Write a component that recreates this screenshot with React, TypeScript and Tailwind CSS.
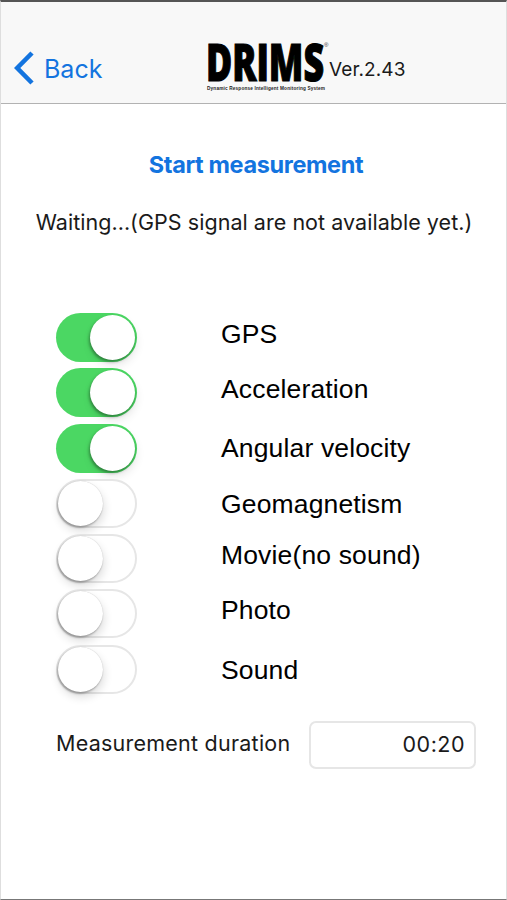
import React from "react";

type ToggleProps = {
    on: boolean;
};

type Sensor = {
    name: string;
    on: boolean;
    labelClass: string;
};

const sensors: Sensor[] = [
    { name: "GPS", on: true, labelClass: "pb-[8px]" },
    { name: "Acceleration", on: true, labelClass: "pb-[7px]" },
    { name: "Angular velocity", on: true, labelClass: "pb-0" },
    { name: "Geomagnetism", on: false, labelClass: "pt-[1px]" },
    { name: "Movie(no sound)", on: false, labelClass: "pb-[7px]" },
    { name: "Photo", on: false, labelClass: "pb-[7px]" },
    { name: "Sound", on: false, labelClass: "pt-[1px]" },
];

function Toggle({ on }: ToggleProps) {
    return (
        <button
            role="switch"
            aria-checked={on}
            className={`flex h-[49px] w-[81px] shrink-0 items-center rounded-full ${
                on
                    ? "justify-end bg-[#4bd763] px-[2px]"
                    : "justify-start border-2 border-[#e6e6e6] bg-white"
            }`}
        >
            <span
                className={`block size-[45px] rounded-full bg-white ${
                    on
                        ? "shadow-[-1px_2px_3px_rgba(0,0,0,0.35),1px_5px_10px_rgba(0,0,0,0.1)]"
                        : "shadow-[-1px_2px_2px_rgba(0,0,0,0.24),0_0_1px_rgba(0,0,0,0.25),1px_5px_10px_rgba(0,0,0,0.14)]"
                }`}
            />
        </button>
    );
}

function Logo() {
    return (
        <svg width="123" height="54" viewBox="0 0 123 54" className="shrink-0">
            <text
                x="0"
                y="42"
                textLength="118"
                lengthAdjust="spacingAndGlyphs"
                fontSize="52"
                fontWeight="800"
                fill="#000"
                stroke="#000"
                strokeWidth="1.2"
                className="font-['Open_Sans',sans-serif]"
            >
                DRIMS
            </text>
            <text x="118" y="8" fontSize="6" fill="#333" className="font-['Liberation_Sans',sans-serif]">
                ®
            </text>
            <text
                x="1"
                y="51"
                textLength="118"
                lengthAdjust="spacing"
                fontSize="4.7"
                fontWeight="700"
                fill="#222"
                className="font-['Liberation_Sans',sans-serif]"
            >
                Dynamic Response Intelligent Monitoring System
            </text>
        </svg>
    );
}

export default function App() {
    return (
        <div className="flex h-[900px] w-[507px] flex-col border-x border-t-2 border-b border-x-[#dedede] border-t-[#555] border-b-[#777] bg-white font-['Inter',sans-serif] text-[#1a1a1a]">
            <header className="flex h-[102px] shrink-0 items-start border-b border-[#b2b2b2] bg-[#f8f8f8] pt-[37px]">
                <button className="flex h-[58px] w-[205px] items-center pl-[13px] text-[#1374df]">
                    <svg width="20" height="34" viewBox="0 0 20 34" fill="none">
                        <path d="M18 2 L3.2 17 L18 32" stroke="currentColor" strokeWidth="4.6" />
                    </svg>
                    <span className="pt-[3px] pl-[10px] text-[25px]">Back</span>
                </button>
                <Logo />
                <span className="pt-[18px] text-[19px] leading-[26px] tracking-[0.1px]">
                    Ver.2.43
                </span>
            </header>

            <main className="flex flex-col">
                <button className="mt-[45px] self-center pl-[5px] text-[23.5px] leading-[32px] font-bold tracking-[-0.37px] text-[#1374df]">
                    Start measurement
                </button>
                <p className="mt-[26px] self-center pl-px text-[21.5px] leading-[30px] tracking-[0.04px] whitespace-nowrap">
                    Waiting...(GPS signal are not available yet.)
                </p>

                <ul className="mt-[73px] flex flex-col pl-[55px]">
                    {sensors.map((el) => (
                        <li key={el.name} className="flex h-[55.25px] items-center">
                            <Toggle on={el.on} />
                            <span
                                className={`pl-[84px] font-['Liberation_Sans',sans-serif] text-[26.5px] leading-[30px] tracking-[0.15px] text-black ${el.labelClass}`}
                            >
                                {el.name}
                            </span>
                        </li>
                    ))}
                </ul>

                <div className="mt-[24px] flex items-center pl-[55px]">
                    <label className="w-[253px] pb-[3px] text-[21.5px] tracking-[0.24px] whitespace-nowrap">
                        Measurement duration
                    </label>
                    <div className="flex h-[48px] w-[167px] items-center justify-end rounded-[7px] border-2 border-[#e6e6e6] pr-[9px] pb-[2px] text-[21.5px] tracking-[0.5px]">
                        00:20
                    </div>
                </div>
            </main>
        </div>
    );
}
